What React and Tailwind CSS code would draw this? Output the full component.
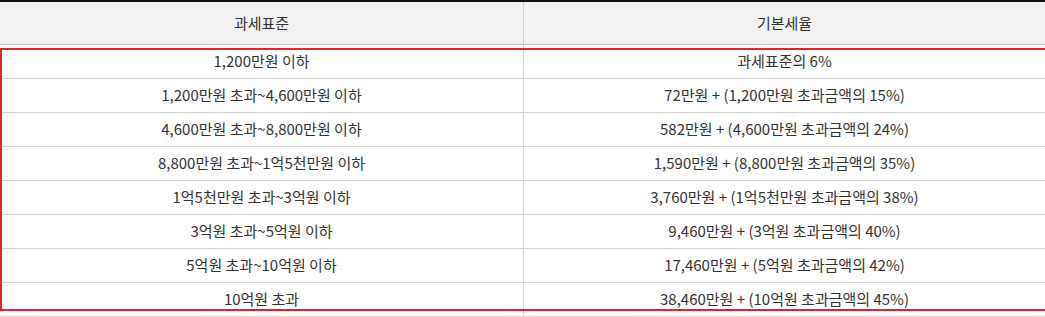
const rows = [
  ['1,200만원 이하', '과세표준의 6%'],
  ['1,200만원 초과~4,600만원 이하', '72만원 + (1,200만원 초과금액의 15%)'],
  ['4,600만원 초과~8,800만원 이하', '582만원 + (4,600만원 초과금액의 24%)'],
  ['8,800만원 초과~1억5천만원 이하', '1,590만원 + (8,800만원 초과금액의 35%)'],
  ['1억5천만원 초과~3억원 이하', '3,760만원 + (1억5천만원 초과금액의 38%)'],
  ['3억원 초과~5억원 이하', '9,460만원 + (3억원 초과금액의 40%)'],
  ['5억원 초과~10억원 이하', '17,460만원 + (5억원 초과금액의 42%)'],
  ['10억원 초과', '38,460만원 + (10억원 초과금액의 45%)'],
];

export default function App() {
  return (
    <div
      className="relative w-[1045px] h-[317px] overflow-hidden bg-white text-[15px] text-[#333]"
      style={{ fontFamily: '"Noto Sans CJK KR", "Noto Sans", sans-serif' }}
    >
      <div className="border-t-2 border-[#111]">
        <div className="grid grid-cols-[524px_1fr] h-[43px] bg-[#f2f2f2] border-b border-[#c4c4c4]">
          <div className="flex items-center justify-center border-r border-[#d4d4d4]">과세표준</div>
          <div className="flex items-center justify-center">기본세율</div>
        </div>
        {rows.map(([base, rate], i) => (
          <div key={i} className="grid grid-cols-[524px_1fr] h-[34px] border-b border-[#d4d4d4]">
            <div className="flex items-center justify-center border-r border-[#d4d4d4]">{base}</div>
            <div className="flex items-center justify-center">{rate}</div>
          </div>
        ))}
      </div>

      {/* highlight box laid over the rows */}
      <div className="absolute left-0 top-[48px] h-[263px] w-[1050px] border-2 border-[#e8202a] pointer-events-none" />
    </div>
  );
}
